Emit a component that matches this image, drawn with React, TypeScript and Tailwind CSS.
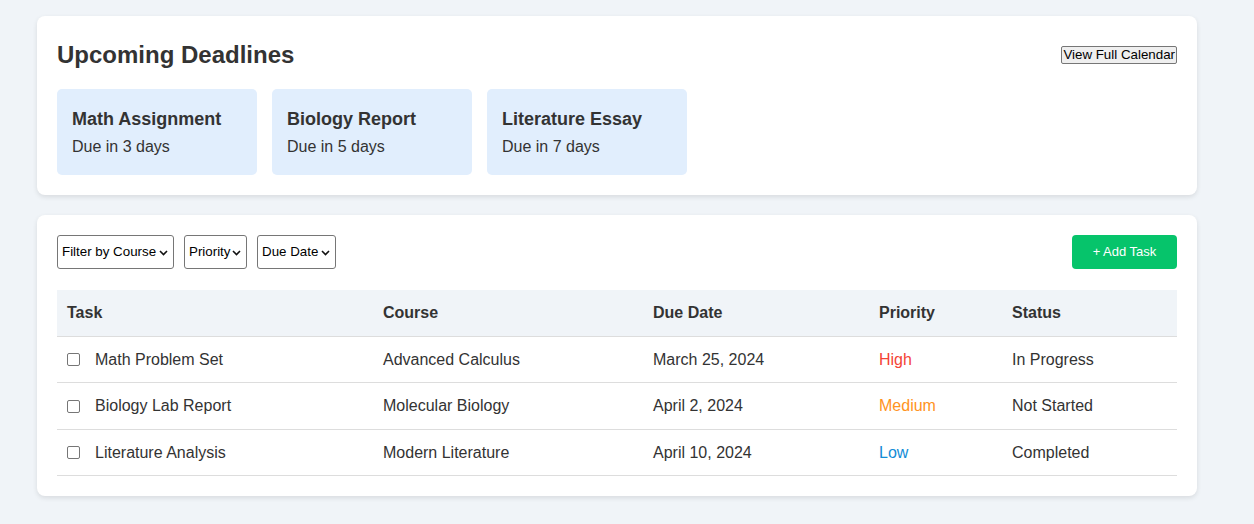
import React from "react";

const deadlines = [
  { title: "Math Assignment", due: "Due in 3 days" },
  { title: "Biology Report", due: "Due in 5 days" },
  { title: "Literature Essay", due: "Due in 7 days" },
];

const tasks = [
  { task: "Math Problem Set", course: "Advanced Calculus", date: "March 25, 2024", priority: "High", color: "text-[#f44336]", status: "In Progress" },
  { task: "Biology Lab Report", course: "Molecular Biology", date: "April 2, 2024", priority: "Medium", color: "text-[#ff9322]", status: "Not Started" },
  { task: "Literature Analysis", course: "Modern Literature", date: "April 10, 2024", priority: "Low", color: "text-[#128cd6]", status: "Completed" },
];

function Chevron() {
  return (
    <svg width="9" height="6" viewBox="0 0 9 6" className="pointer-events-none absolute right-[6px] top-[15px]">
      <path d="M1 1 L4.5 4.5 L8 1" fill="none" stroke="#111" strokeWidth="1.6" />
    </svg>
  );
}

function Select({ label, w }: { label: string; w: string }) {
  return (
    <div className={`relative h-[34px] ${w}`}>
      <select className="h-full w-full appearance-none rounded-[3px] border border-[#767676] bg-white pl-[4px] text-[13.33px] text-black outline-none">
        <option>{label}</option>
      </select>
      <Chevron />
    </div>
  );
}

export default function App() {
  return (
    <div className="min-h-[524px] w-full bg-[#f0f4f8] pt-[16px] pb-[28px] font-['Liberation_Sans',Arial,sans-serif] text-[#333]">
      <div className="ml-[37px] flex w-[1160px] flex-col gap-[20px]">
        <section className="rounded-[8px] bg-white p-[20px] shadow-[0_2px_5px_rgba(0,0,0,0.1)]">
          <div className="mb-[15px] flex h-[38px] items-center justify-between">
            <h2 className="text-[24px] font-bold leading-[28px] text-[#333]">Upcoming Deadlines</h2>
            <button className="h-[18px] rounded-[2px] border border-[#767676] bg-[#efefef] px-[1px] text-[13.33px] leading-[16px] text-black">
              View Full Calendar
            </button>
          </div>
          <div className="flex gap-[15px]">
            {deadlines.map((d) => (
              <div key={d.title} className="h-[86px] w-[200px] rounded-[5px] bg-[#e1eefd] px-[15px] pt-[19px]">
                <div className="text-[18px] font-bold leading-[22px] text-[#333]">{d.title}</div>
                <div className="mt-[7px] text-[16px] leading-[19px] text-[#333]">{d.due}</div>
              </div>
            ))}
          </div>
        </section>

        <section className="rounded-[8px] bg-white p-[20px] shadow-[0_2px_5px_rgba(0,0,0,0.1)]">
          <div className="mb-[21px] flex items-center justify-between">
            <div className="flex gap-[10px]">
              <Select label="Filter by Course" w="w-[117px]" />
              <Select label="Priority" w="w-[63px]" />
              <Select label="Due Date" w="w-[79px]" />
            </div>
            <button className="h-[34px] w-[105px] rounded-[4px] bg-[#06c46b] text-[13px] text-white">+ Add Task</button>
          </div>
          <table className="w-[1120px] table-fixed border-collapse text-left text-[16px]">
            <thead>
              <tr className="h-[46px] border-b border-[#dddddd] bg-[#f0f4f8]">
                <th className="w-[316px] pl-[10px] font-bold">Task</th>
                <th className="w-[270px] pl-[10px] font-bold">Course</th>
                <th className="w-[226px] pl-[10px] font-bold">Due Date</th>
                <th className="w-[133px] pl-[10px] font-bold">Priority</th>
                <th className="pl-[10px] font-bold">Status</th>
              </tr>
            </thead>
            <tbody>
              {tasks.map((t, i) => (
                <tr key={t.task} className={`${i === 1 ? "h-[47px]" : "h-[46px]"} border-b border-[#dddddd]`}>
                  <td className="pl-[10px] pt-[1px]">
                    <div className="flex items-center">
                      <input
                        type="checkbox"
                        className="mr-[15px] h-[13px] w-[13px] appearance-none rounded-[2px] border border-[#767676] bg-white"
                      />
                      <span>{t.task}</span>
                    </div>
                  </td>
                  <td className="pl-[10px] pt-[1px]">{t.course}</td>
                  <td className="pl-[10px] pt-[1px]">{t.date}</td>
                  <td className={`pl-[10px] pt-[1px] ${t.color}`}>{t.priority}</td>
                  <td className="pl-[10px] pt-[1px]">{t.status}</td>
                </tr>
              ))}
            </tbody>
          </table>
        </section>
      </div>
    </div>
  );
}
